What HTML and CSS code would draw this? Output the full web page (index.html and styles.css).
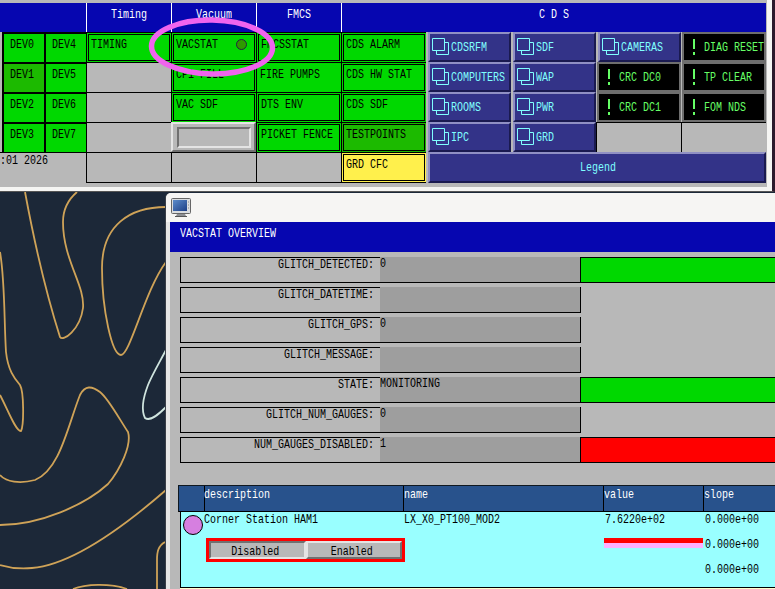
FILE: index.html
```html
<!DOCTYPE html>
<html lang="en">
<head>
<meta charset="utf-8">
<title>Overview</title>
<link rel="stylesheet" href="styles.css">
</head>
<body>
<svg class="wallpaper" width="775" height="589" viewBox="0 0 775 589">
  <g class="contour">
    <path d="M25 192C33 235 45 290 60 337C63 342 80 330 83 308C85 285 63 260 63 222C63 208 70 198 77 192"/>
    <path d="M166 207C130 207 102 225 102 268C102 310 112 355 121 355C130 355 145 290 166 262"/>
    <path d="M0 252C5 280 4 320 6 352C8 370 14 378 20 385C24 392 24 425 21 431C16 432 8 410 0 395"/>
    <path d="M0 475C6 482 20 484 35 480C60 470 68 425 80 395C85 385 92 386 100 392C108 398 120 420 128 432C132 445 120 470 108 484C85 505 40 525 0 525"/>
    <path d="M0 565C10 568 22 569 32 568C70 565 120 530 166 490"/>
    <path d="M165 542C158 546 157 552 157 560L157 589"/>
    <path d="M73 589C85 584 110 583 127 589"/>
  </g>
  <path class="contour-light" d="M166 350C158 365 152 375 148 385C143 398 141 410 145 418C150 422 158 415 166 407"/>
</svg>

<section class="panel">
  <div class="board">
    <div class="head head-first"></div>
    <div class="head"><span class="t">Timing</span></div>
    <div class="head"><span class="t">Vacuum</span></div>
    <div class="head"><span class="t">FMCS</span></div>
    <div class="head head-cds"><span class="t">C D S</span></div>

    <div class="edge"></div>
    <div class="dev"><span class="t">DEV0</span></div>
    <div class="dev"><span class="t">DEV4</span></div>
    <div class="cell green"><div class="box"><span class="t">TIMING</span></div></div>
    <div class="cell green"><div class="box box-dot"><span class="t">VACSTAT</span><i class="dot"></i></div></div>
    <div class="cell green"><div class="box"><span class="t">FMCSSTAT</span></div></div>
    <div class="cell green"><div class="box"><span class="t">CDS ALARM</span></div></div>
    <div class="link"><svg class="stack" viewBox="0 0 18 18"><path d="M.5.5h12v12H.5zM12.500 4.500h4v12h-12v-4"/></svg><span class="t">CDSRFM</span></div>
    <div class="link"><svg class="stack" viewBox="0 0 18 18"><path d="M.5.5h12v12H.5zM12.500 4.500h4v12h-12v-4"/></svg><span class="t">SDF</span></div>
    <div class="link"><svg class="stack" viewBox="0 0 18 18"><path d="M.5.5h12v12H.5zM12.500 4.500h4v12h-12v-4"/></svg><span class="t">CAMERAS</span></div>
    <div class="cmd"><b class="bang"></b><span class="t">DIAG RESET</span></div>

    <div class="edge"></div>
    <div class="dev dark"><span class="t">DEV1</span></div>
    <div class="dev"><span class="t">DEV5</span></div>
    <div class="cell"></div>
    <div class="cell green"><div class="box"><span class="t">CP1 FILL</span></div></div>
    <div class="cell green plain"><span class="t">FIRE PUMPS</span></div>
    <div class="cell green"><div class="box"><span class="t">CDS HW STAT</span></div></div>
    <div class="link"><svg class="stack" viewBox="0 0 18 18"><path d="M.5.5h12v12H.5zM12.500 4.500h4v12h-12v-4"/></svg><span class="t">COMPUTERS</span></div>
    <div class="link"><svg class="stack" viewBox="0 0 18 18"><path d="M.5.5h12v12H.5zM12.500 4.500h4v12h-12v-4"/></svg><span class="t">WAP</span></div>
    <div class="cmd"><b class="bang"></b><span class="t">CRC DC0</span></div>
    <div class="cmd"><b class="bang"></b><span class="t">TP CLEAR</span></div>

    <div class="edge"></div>
    <div class="dev"><span class="t">DEV2</span></div>
    <div class="dev"><span class="t">DEV6</span></div>
    <div class="cell"></div>
    <div class="cell green"><div class="box"><span class="t">VAC SDF</span></div></div>
    <div class="cell green"><div class="box"><span class="t">DTS ENV</span></div></div>
    <div class="cell green"><div class="box"><span class="t">CDS SDF</span></div></div>
    <div class="link"><svg class="stack" viewBox="0 0 18 18"><path d="M.5.5h12v12H.5zM12.500 4.500h4v12h-12v-4"/></svg><span class="t">ROOMS</span></div>
    <div class="link"><svg class="stack" viewBox="0 0 18 18"><path d="M.5.5h12v12H.5zM12.500 4.500h4v12h-12v-4"/></svg><span class="t">PWR</span></div>
    <div class="cmd"><b class="bang"></b><span class="t">CRC DC1</span></div>
    <div class="cmd"><b class="bang"></b><span class="t">FOM NDS</span></div>

    <div class="edge"></div>
    <div class="dev"><span class="t">DEV3</span></div>
    <div class="dev"><span class="t">DEV7</span></div>
    <div class="cell"></div>
    <div class="raised"><div class="sunken"></div></div>
    <div class="cell green"><div class="box"><span class="t">PICKET FENCE</span></div></div>
    <div class="cell green dim"><div class="box"><span class="t">TESTPOINTS</span></div></div>
    <div class="link"><svg class="stack" viewBox="0 0 18 18"><path d="M.5.5h12v12H.5zM12.500 4.500h4v12h-12v-4"/></svg><span class="t">IPC</span></div>
    <div class="link"><svg class="stack" viewBox="0 0 18 18"><path d="M.5.5h12v12H.5zM12.500 4.500h4v12h-12v-4"/></svg><span class="t">GRD</span></div>
    <div class="cell"></div>
    <div class="cell"></div>

    <div class="clock"><span class="t">:01 2026</span></div>
    <div class="cell end"></div>
    <div class="cell end"></div>
    <div class="cell end"></div>
    <div class="cell end yellow"><div class="box"><span class="t">GRD CFC</span></div></div>
    <div class="legend"><span class="t">Legend</span></div>
  </div>
</section>

<svg class="marker" width="140" height="72" viewBox="0 0 140 72">
  <ellipse cx="70" cy="36" rx="60.500" ry="27" transform="rotate(1 70 36)"/>
</svg>

<section class="window">
  <header class="titlebar">
    <svg width="21" height="20" viewBox="0 0 21 20">
      <defs><linearGradient id="scr" x1="0" y1="0" x2="1" y2="1"><stop offset="0" stop-color="#5c8ccb"/><stop offset="1" stop-color="#1d3f86"/></linearGradient></defs>
      <rect x=".5" y=".5" width="19" height="15" rx="1" fill="#d9dcdf" stroke="#666"/>
      <rect x="2" y="2" width="14" height="11" fill="url(#scr)"/>
      <path d="M17 4h1M17 7h1M17 10h1" stroke="#888"/>
      <path d="M6 16h8l1 2H5z" fill="#8d8f93"/>
      <path d="M4 18.500h12" stroke="#555"/>
    </svg>
  </header>
  <div class="content">
    <h1 class="banner"><span class="t">VACSTAT OVERVIEW</span></h1>
    <div class="fields">
      <div class="field"><div class="label"><span class="t">GLITCH_DETECTED:</span></div><div class="val"><span class="t">0</span></div><div class="ind ind-green"></div></div>
      <div class="field"><div class="label"><span class="t">GLITCH_DATETIME:</span></div><div class="val"></div></div>
      <div class="field"><div class="label"><span class="t">GLITCH_GPS:</span></div><div class="val"><span class="t">0</span></div></div>
      <div class="field"><div class="label"><span class="t">GLITCH_MESSAGE:</span></div><div class="val"></div></div>
      <div class="field"><div class="label"><span class="t">STATE:</span></div><div class="val"><span class="t">MONITORING</span></div><div class="ind ind-green"></div></div>
      <div class="field"><div class="label"><span class="t">GLITCH_NUM_GAUGES:</span></div><div class="val"><span class="t">0</span></div></div>
      <div class="field"><div class="label"><span class="t">NUM_GAUGES_DISABLED:</span></div><div class="val"><span class="t">1</span></div><div class="ind ind-red"></div></div>
    </div>
    <div class="table">
      <div class="thead">
        <div class="th"></div>
        <div class="th"><span class="t">description</span></div>
        <div class="th"><span class="t">name</span></div>
        <div class="th"><span class="t">value</span></div>
        <div class="th"><span class="t">slope</span></div>
      </div>
      <div class="tbody">
        <div class="td-state"><i class="circle"></i></div>
        <div class="td">
          <span class="t">Corner Station HAM1</span>
          <div class="switch">
            <div class="sw"><span class="t">Disabled</span></div>
            <div class="sw"><span class="t">Enabled</span></div>
          </div>
        </div>
        <div class="td"><span class="t">LX_X0_PT100_MOD2</span></div>
        <div class="td td-value">
          <span class="t">7.6220e+02</span>
          <div class="bar"></div>
        </div>
        <div class="td td-slope">
          <span class="t">0.000e+00</span>
          <span class="t">0.000e+00</span>
          <span class="t">0.000e+00</span>
        </div>
      </div>
      <div class="tfoot"></div>
    </div>
  </div>
</section>
</body>
</html>
```
FILE: styles.css
```css
* { box-sizing: border-box; }
html, body { margin: 0; height: 100%; }
body {
  position: relative;
  width: 775px;
  height: 589px;
  overflow: hidden;
  background: #1c2838;
  font: 10px/13px "Liberation Mono", monospace;
  color: #000;
}
.t { display: inline-block; transform: scaleY(1.36); white-space: pre; }

.wallpaper { position: absolute; left: 0; top: 0; }
.contour { fill: none; stroke: #cfa358; stroke-width: 1.8; }
.contour-light { fill: none; stroke: #cfe4de; stroke-width: 1.8; }

.panel {
  position: absolute;
  left: 0;
  top: 0;
  width: 775px;
  height: 192px;
  background: #f5f5f3;
  border-right: 3px solid #2c1a2c;
  border-bottom: 1px solid #555;
}
.board {
  width: 767px;
  height: 187px;
  padding-top: 3px;
  background: #b8b8b8;
  display: grid;
  grid-template-columns: 2px 42px 42px repeat(8, 85px);
  grid-template-rows: 29px 30px 30px 30px 30px 31px;
}
.head {
  background: #0606b0;
  border-left: 1px solid #fff;
  color: #fff;
  text-align: center;
  padding-top: 5px;
}
.head-first { grid-column: span 3; border-left: 0; }
.head-cds { grid-column: span 5; }
.edge { background: #b8b8b8; }
.dev {
  background: #00d800;
  border: solid #000;
  border-width: 2px 0 0 2px;
  padding: 4px 0 0 6px;
}
.dark { background: #1cba00; }
.cell {
  border-top: 1px solid #000;
  border-left: 1px solid #000;
  background: #b8b8b8;
}
.green { background: #00d800; padding: 1px; }
.dim { background: #1cba00; }
.plain { padding: 5px 0 0 3px; }
.yellow { background: #fff04c; padding: 1px; }
.end { border-bottom: 1px solid #000; }
.box {
  height: 100%;
  border: 1px solid #000;
  padding: 3px 0 0 2px;
  position: relative;
}
.dot {
  position: absolute;
  right: 7px;
  top: 4px;
  width: 11px;
  height: 11px;
  border-radius: 50%;
  background: #2e9a00;
  border: 1px solid #224;
}
.raised {
  border-top: 2px solid #e4e4e4;
  border-left: 2px solid #e4e4e4;
  border-right: 2px solid #707070;
  border-bottom: 2px solid #707070;
  padding: 3px 3px 2px 4px;
  background: #b8b8b8;
}
.sunken {
  height: 100%;
  border-top: 2px solid #707070;
  border-left: 2px solid #707070;
  border-right: 2px solid #e4e4e4;
  border-bottom: 2px solid #e4e4e4;
}
.link, .cmd, .legend {
  border-top: 2px solid #9090c4;
  border-left: 2px solid #9090c4;
  border-right: 2px solid #1a1a50;
  border-bottom: 2px solid #1a1a50;
  background: #333388;
  color: #80ffff;
  display: flex;
  align-items: center;
}
.link { margin-left: 2px; padding-left: 2px; }
.stack { width: 18px; height: 18px; flex: none; margin-right: 1px; fill: none; stroke: #80ffff; stroke-width: 1; }
.cmd {
  margin-left: 1px;
  border-color: #6e6e6e;
  background: #000;
  color: #66ff66;
  padding-left: 9px;
}
.bang {
  width: 2px;
  height: 16px;
  margin-right: 9px;
  flex: none;
  background: linear-gradient(#66ff66 0 10px, transparent 10px 13px, #66ff66 13px);
}
.legend { grid-column: span 4; justify-content: center; margin-left: 2px; padding-left: 2px; }
.clock {
  grid-column: span 3;
  border-top: 1px solid #000;
  padding-top: 1px;
  overflow: hidden;
}

.marker { position: absolute; left: 142px; top: 11px; fill: none; stroke: #f064ee; stroke-width: 5.500; }

.window {
  position: absolute;
  left: 166px;
  top: 193px;
  width: 609px;
  height: 396px;
  background: #e6e6e6;
  border-radius: 5px 0 0 0;
  box-shadow: -1px 0 0 #3a3f48;
  padding-left: 4px;
  display: flex;
  flex-direction: column;
}
.titlebar {
  height: 29px;
  margin-left: -4px;
  padding: 5px 0 0 5px;
  background: #f6f5f3;
  border-radius: 5px 0 0 0;
  flex: none;
}
.titlebar svg { display: block; }
.content { flex: 1; background: #b8b8b8; display: flex; flex-direction: column; }
.banner {
  margin: 0;
  height: 30px;
  background: #0606b0;
  color: #fff;
  font: inherit;
  padding: 5px 0 0 10px;
}
.fields { padding: 5px 0 0 10px; display: flex; flex-direction: column; gap: 4px; }
.field { display: flex; height: 26px; }
.label {
  width: 200px;
  border: solid #000;
  border-width: 1px 0 1px 1px;
  text-align: right;
  padding-right: 6px;
}
.val {
  width: 201px;
  background: #9e9e9e;
  border: solid #000;
  border-width: 0 1px 1px 0;
}
.ind { flex: 1; border: solid #000; border-width: 1px 0 1px 0; }
.ind-green { background: #00d800; }
.ind-red { background: #ff0000; }

.table { margin: 22px 0 0 8px; }
.thead {
  display: grid;
  grid-template-columns: 25px 200px 200px 100px 1fr;
  height: 27px;
  background: #28528c;
  border-top: 1px solid #101820;
  border-left: 1px solid #101820;
  border-bottom: 1px solid #000;
  color: #fff;
}
.th { border-right: 1px solid #000; padding-top: 2px; }
.th:first-child { margin-right: -1px; }
.th:last-child { border-right: 0; }
.tbody {
  margin-left: 2px;
  height: 76px;
  display: grid;
  grid-template-columns: 22px 200px 200px 100px 1fr;
  background: #99ffff;
  border-left: 1px solid #000;
  border-bottom: 1px solid #000;
  padding-top: 1px;
}
.td { padding: 0 0 0 1px; min-width: 0; }
.td-state { padding: 2px 0 0 2px; }
.circle {
  display: block;
  width: 20px;
  height: 20px;
  border-radius: 50%;
  background: #d67fe0;
  border: 1px solid #000;
}
.switch {
  display: flex;
  width: 199px;
  height: 24px;
  margin: 12px 0 0 2px;
  border: 3px solid #f00;
  position: relative;
}
.sw {
  flex: 1;
  background: #b8b8b8;
  border-top: 2px solid #707070;
  border-left: 2px solid #707070;
  border-right: 2px solid #e4e4e4;
  border-bottom: 2px solid #e4e4e4;
  text-align: center;
  padding: 2px 4px 0 0;
}
.sw + .sw { border-color: #e4e4e4 #707070 #707070 #e4e4e4; }
.td-value { padding-left: 2px; }
.bar {
  height: 10px;
  margin: 12px 0 0 -1px;
  background: linear-gradient(#f00 50%, #ffb0ff 50%);
}
.td-slope { padding: 0 0 0 2px; display: flex; flex-direction: column; gap: 12px; align-items: flex-start; }
.tfoot { height: 1px; margin-left: 2px; background: #ffffcc; }
```
